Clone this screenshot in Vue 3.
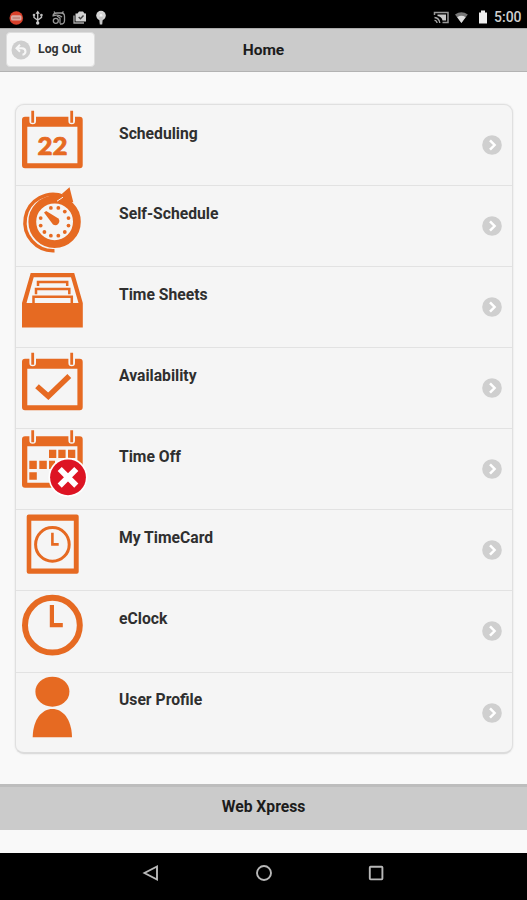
<script setup>
const items = [
  { id: 'scheduling', label: 'Scheduling' },
  { id: 'self', label: 'Self-Schedule' },
  { id: 'sheets', label: 'Time Sheets' },
  { id: 'availability', label: 'Availability' },
  { id: 'off', label: 'Time Off' },
  { id: 'card', label: 'My TimeCard' },
  { id: 'eclock', label: 'eClock' },
  { id: 'profile', label: 'User Profile' },
]
const dots = Array.from({ length: 12 }, (_, i) => {
  const a = ((i * 30 + 15) * Math.PI) / 180
  return { x: 38.6 + 14.4 * Math.cos(a), y: 36.8 + 14.4 * Math.sin(a) }
}).filter((_, i) => i !== 7)
</script>

<template>
  <div class="screen">
    <div class="status">
      <svg class="status-left" width="110" height="28" viewBox="0 0 110 28">
        <circle cx="16.3" cy="18" r="6.8" fill="#d8402b" />
        <rect x="11" y="15.3" width="10.5" height="5.2" rx="1.5" fill="#d8aaa2" />
        <path d="M12.5 18h7.5" stroke="#b06d63" stroke-width="1" />
        <g fill="none" stroke="#bdbdbd" stroke-width="1.4">
          <path d="M37.7 12v11M34 15v2.5l3.7 2.8M41.5 14.5v2.8l-3.8 3" />
        </g>
        <path d="M37.7 10.5l2.2 3.3h-4.4z" fill="#ccc" />
        <circle cx="37.7" cy="23" r="1.7" fill="#ccc" />
        <circle cx="34" cy="15" r="1.3" fill="#bbb" />
        <circle cx="41.4" cy="15" r="1.3" fill="#bbb" />
        <g fill="none" stroke="#999" stroke-width="1.3">
          <path d="M53 16.5q0-3.5 4-3.5h4q3.5 0 3.5 3.5v4q0 3.5-3.5 3.5h-1M53 16q5-2 9 1M55 13l-1-1.5M62 13l1.5-1.5" />
          <circle cx="55.8" cy="20.8" r="2.5" />
          <path d="M60 17.5v6M57 16l3 2" />
        </g>
        <path d="M75.5 13.5h2l1.5-2h4l1.5 2h1.5v8H75.5z" fill="#d2d2d2" />
        <path d="M74 15.5v7.5h10" fill="none" stroke="#aaa" stroke-width="1.3" />
        <path d="M78.7 17l1.8 1.8 3-3.3" fill="none" stroke="#444" stroke-width="1.4" />
        <circle cx="101" cy="15.6" r="4.8" fill="#d5d5d5" />
        <path d="M99 17h4l-.8 7.5h-2.4z" fill="#c5c5c5" />
        <circle cx="101" cy="15.2" r="1.2" fill="#f3f3f3" />
      </svg>
      <div class="status-right">
        <svg width="60" height="28" viewBox="0 0 60 28">
          <path d="M1.5 15v-2.5H15V22.500H9.500" fill="none" stroke="#999" stroke-width="1.5" />
          <path d="M4.500 14.500h8.500v6h-3.500q-.7-4-5-4.500z" fill="#c8c8c8" />
          <path d="M1.500 17.500q4.800.5 5.300 5.500M1.500 20.300q2.300.2 2.600 2.700" fill="none" stroke="#aaa" stroke-width="1.3" />
          <path d="M22 14.600q6.400-4.600 12.800 0L28.400 23z" fill="#777" />
          <path d="M24.200 17.200q4.200-2.700 8.400 0L28.400 23z" fill="#ddd" />
          <path d="M46 12.500h2v-2h4v2h2V23.500h-8z" fill="#eee" />
        </svg>
        <span class="time">5:00</span>
      </div>
    </div>

    <header class="bar header">
      <button class="logout">
        <svg width="20" height="20" viewBox="0 0 20 20">
          <circle cx="10" cy="10" r="9.5" fill="#cecece" />
          <path d="M9 4.8L5.500 8.300 9 11.800M5.800 8.300H11q3.500.2 3.500 3.400-.2 2.500-3 3" fill="none" stroke="#f7f7f7" stroke-width="2" />
        </svg>
        <span>Log Out</span>
      </button>
      <h1 class="title">Home</h1>
      <span></span>
    </header>

    <main class="content">
      <ul class="list">
        <li v-for="item in items" :key="item.id" class="row">
          <svg class="icon" width="76" height="79" viewBox="0 0 76 79">
            <g v-if="['scheduling', 'availability', 'off'].includes(item.id)" :class="{ raised: item.id === 'off' }">
              <path class="solid" fill-rule="evenodd" d="M9 11.700H63.700a3 3 0 0 1 3 3V60.300a3 3 0 0 1-3 3H9a3 3 0 0 1-3-3V14.700a3 3 0 0 1 3-3zM11.300 21.700V58.300H61.400V21.700z" />
              <path d="M16.700 9v7M55.700 9v7" stroke="#f5f5f5" stroke-width="6.600" stroke-linecap="round" />
              <path d="M16.700 5.800v12M55.700 5.800v12" class="line" stroke-width="2.800" />
            </g>
            <text v-if="item.id === 'scheduling'" class="date" x="36.500" y="49.700" text-anchor="middle" textLength="30" lengthAdjust="spacingAndGlyphs">22</text>

            <g v-if="item.id === 'self'">
              <circle class="line" cx="38.600" cy="36.800" r="22.300" stroke-width="7.800" />
              <path class="line" d="M48 11.500A28.200 28.200 0 1 0 38.500 65.700" stroke-width="3.500" />
              <path class="solid" d="M53.500 2.300L57.300 17.200 42.800 16.500 47.500 12.300 46 8.800z" />
              <path d="M41 16.200l6-4" stroke="#f5f5f5" stroke-width="1" />
              <circle v-for="(d, i) in dots" :key="i" class="solid" :cx="d.x" :cy="d.y" r="1.900" />
              <path class="solid" d="M28 27.500l2.200-1.600 11.800 7.400a4 4 0 0 1-5 6.200z" />
            </g>

            <g v-if="item.id === 'sheets'">
              <path class="solid" fill-rule="evenodd" d="M14.700 7.100H58.200L66.800 37V61.600H6V37zM17.700 11.300L10.500 37H62.500L55 11.300z" />
              <path class="line" d="M22 20v-4H51.200v4M20 28.300v-5.200H53.300v5.200M17.500 37.500v-6.800H55.800v6.800" stroke-width="2.500" />
            </g>

            <path v-if="item.id === 'availability'" class="line" d="M21 39.200L32.300 49.200 53.300 29" stroke-width="5.500" />

            <g v-if="item.id === 'off'">
              <path class="solid" d="M33 21.800h7.300v8.300H33zM42.300 21.800h7.300v8.300h-7.300zM52 21.800h7.300v8.300H52zM13.300 32.700h7.500V41h-7.500zM23.300 32.700h7.500V41h-7.500zM33 32.700h6V41h-6zM13.300 44.200h7.500v7.600h-7.500z" />
              <circle cx="52" cy="49.300" r="19.600" fill="#fff" />
              <circle cx="52" cy="49.300" r="17.900" fill="#dd1423" />
              <path d="M43.700 41L60.300 57.600M60.300 41L43.700 57.600" stroke="#fff" stroke-width="5.800" />
            </g>

            <g v-if="item.id === 'card'">
              <path class="solid" fill-rule="evenodd" d="M12.700 5.500H60.700a2 2 0 0 1 2 2V62.800a2 2 0 0 1-2 2H12.700a2 2 0 0 1-2-2V7.500a2 2 0 0 1 2-2zM15.300 11.800V59.600H57.800V11.800z" />
              <circle class="line" cx="36.400" cy="35.400" r="16.800" stroke-width="3" />
              <path class="line" d="M36.400 23.800V35.400H42.700" stroke-width="2.600" />
            </g>

            <g v-if="item.id === 'eclock'">
              <circle class="line" cx="36.400" cy="35.200" r="27.400" stroke-width="6" />
              <path class="line" d="M35.900 15V35.200H46.800" stroke-width="4.200" />
            </g>

            <g v-if="item.id === 'profile'" class="solid">
              <ellipse cx="36.400" cy="19.700" rx="17" ry="15" />
              <path d="M16.700 65.300C17 47 26 37 36.400 37S55.700 47 56 65.300z" />
            </g>
          </svg>
          <span class="label">{{ item.label }}</span>
          <svg class="chevron" width="20" height="20" viewBox="0 0 20 20">
            <circle cx="10" cy="10" r="9.800" fill="#cfcfcf" />
            <path d="M8 5.300L12.600 10 8 14.700" fill="none" stroke="#fff" stroke-width="2.500" />
          </svg>
        </li>
      </ul>
    </main>

    <footer class="bar footer">Web Xpress</footer>
    <nav class="nav">
      <svg width="20" height="20" viewBox="0 0 20 20"><path d="M16 3.500V16.500L3.500 10z" /></svg>
      <svg width="20" height="20" viewBox="0 0 20 20"><circle cx="10" cy="10" r="7" /></svg>
      <svg width="20" height="20" viewBox="0 0 20 20"><rect x="3.800" y="3.800" width="12.600" height="12.600" rx=".8" /></svg>
    </nav>
  </div>
</template>

<style>
body { margin: 0; background: #f9f9f9; }
</style>

<style scoped>
.screen {
  box-sizing: border-box;
  width: 527px;
  height: 900px;
  display: flex;
  flex-direction: column;
  background: #f9f9f9;
  color: #2f2f2f;
  font-family: Roboto, sans-serif;
  font-weight: 700;
  font-size: 15.7px;
  overflow: hidden;
}
.status {
  height: 28px;
  flex: none;
  display: flex;
  justify-content: space-between;
  background: #000;
}
.status-right { display: flex; padding-right: 5px; }
.status-right svg { margin-right: 1px; }
.time {
  width: 28px;
  padding-top: 9px;
  color: #cfcfcf;
  font-size: 14px;
  font-weight: 500;
  line-height: 17px;
  white-space: nowrap;
}
.bar { box-sizing: border-box; flex: none; background: #cbcbcb; color: #1c1c1c; }
.header {
  height: 44px;
  display: grid;
  grid-template-columns: 1fr auto 1fr;
  align-items: start;
  padding: 3px 6px 0;
  border-top: 1px solid #aaa;
  border-bottom: 1px solid #b3b3b3;
}
.logout {
  width: 89px;
  height: 35px;
  display: flex;
  align-items: center;
  gap: 7px;
  padding: 0 0 0 4px;
  border: 1px solid #ddd;
  border-radius: 4px;
  background: #f7f7f7;
  color: #333;
  font: 700 12.3px/14px Roboto, sans-serif;
  white-space: nowrap;
}
.logout span { padding-bottom: 2px; }
.title { margin: 0; font-size: 15.5px; font-weight: 700; line-height: 36px; }
.content { height: 712px; flex: none; box-sizing: border-box; padding: 32px 14px 0 15px; }
.list {
  box-sizing: border-box;
  height: 650px;
  margin: 0;
  padding: 0;
  list-style: none;
  display: grid;
  grid-template-rows: 80px repeat(7, 81.1px);
  border: 1px solid #e0e0e0;
  border-bottom: 2px solid #dcdcdc;
  border-radius: 9px;
  background: #f5f5f5;
  box-shadow: 0 0 2px #ddd;
}
.row {
  display: flex;
  align-items: flex-start;
  min-height: 0;
  padding-right: 10px;
  box-shadow: 0 1px 0 #e2e2e2;
}
.row:last-child { box-shadow: none; }
.icon { flex: none; }
.label { flex: 1; padding: 19.5px 0 0 27px; line-height: 18px; }
.chevron { flex: none; margin-top: 31px; }
.row:first-child .chevron { margin-top: 30px; }
.solid { fill: #e66a22; }
.line { fill: none; stroke: #e66a22; }
.raised { transform: translateY(-3.5px); }
.date { fill: #e66a22; stroke: #e66a22; stroke-width: 0.7px; font: 900 24px Lato, sans-serif; }
.footer {
  height: 46px;
  border-top: 3px solid #bdbdbd;
  text-align: center;
  line-height: 40px;
}
.nav {
  height: 47px;
  margin-top: auto;
  box-sizing: border-box;
  display: flex;
  justify-content: center;
  gap: 92.5px;
  padding-top: 10px;
  background: #000;
}
.nav svg { fill: none; stroke: #b8b8b8; stroke-width: 1.9; }
</style>
